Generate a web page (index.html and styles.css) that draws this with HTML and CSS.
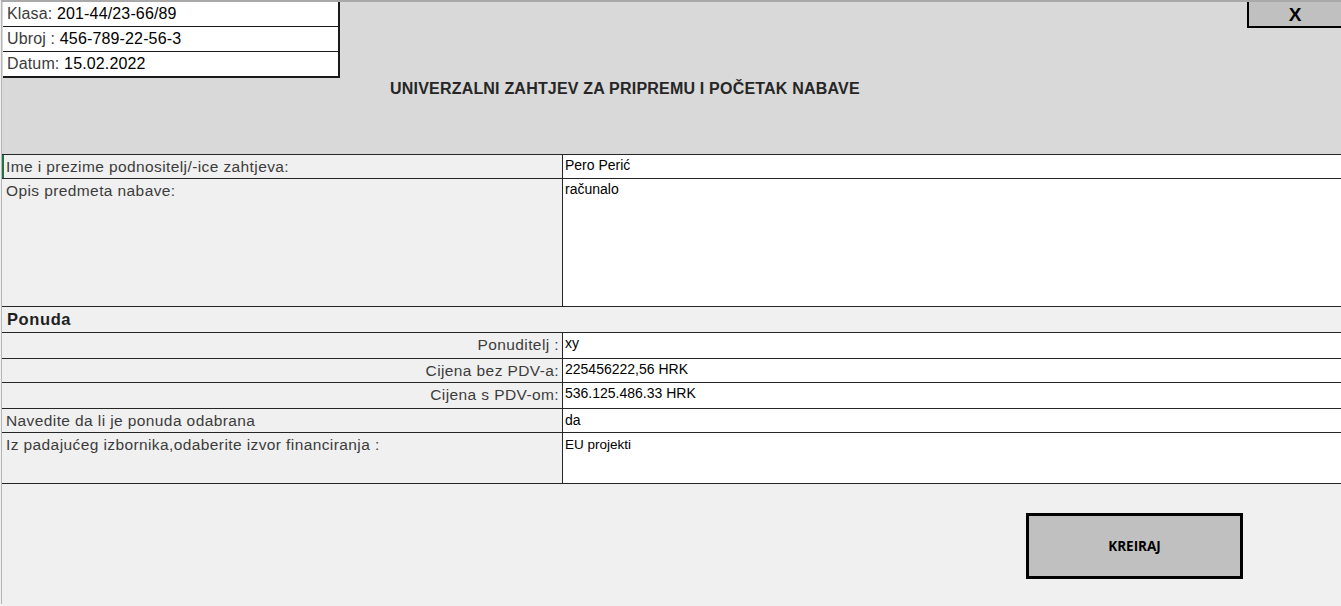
FILE: index.html
```html
<!DOCTYPE html>
<html lang="hr">
<head>
<meta charset="utf-8">
<title>Univerzalni zahtjev</title>
<link rel="stylesheet" href="styles.css">
</head>
<body>
<div class="frame">
  <header class="head">
    <div class="head-top">
      <div class="info">
        <div class="info-row"><span class="lbl">Klasa:</span> 201-44/23-66/89</div>
        <div class="info-row"><span class="lbl">Ubroj :</span> 456-789-22-56-3</div>
        <div class="info-row"><span class="lbl">Datum:</span> 15.02.2022</div>
      </div>
      <div class="close">X</div>
    </div>
    <h1 class="title">UNIVERZALNI ZAHTJEV ZA PRIPREMU I POČETAK NABAVE</h1>
  </header>
  <div class="table">
    <div class="row r1 focus"><div class="label">Ime i prezime podnositelj/-ice zahtjeva:</div><div class="value">Pero Perić</div></div>
    <div class="row r2"><div class="label">Opis predmeta nabave:</div><div class="value">računalo</div></div>
    <div class="row section"><div class="sec">Ponuda</div></div>
    <div class="row r3"><div class="label right">Ponuditelj :</div><div class="value">xy</div></div>
    <div class="row r4"><div class="label right">Cijena bez PDV-a:</div><div class="value">225456222,56 HRK</div></div>
    <div class="row r5"><div class="label right">Cijena s PDV-om:</div><div class="value">536.125.486.33 HRK</div></div>
    <div class="row r6"><div class="label">Navedite da li je ponuda odabrana</div><div class="value v-mid">da</div></div>
    <div class="row r7"><div class="label">Iz padajućeg izbornika,odaberite izvor financiranja :</div><div class="value v-small">EU projekti</div></div>
  </div>
  <div class="foot">
    <div class="btn">KREIRAJ</div>
  </div>
</div>
</body>
</html>
```
FILE: styles.css
```css
html, body {
  margin: 0;
  padding: 0;
  background: #f0f0f0;
  width: 1341px;
  height: 606px;
  overflow: hidden;
}
.frame {
  border-top: 2px solid #a9a9a9;
  border-left: 1px solid #b5b5b5;
  margin-left: 1px;
  height: 604px;
  box-sizing: border-box;
  display: flex;
  flex-direction: column;
  font-family: "Liberation Sans", Arial, sans-serif;
}
.head {
  background: #d9d9d9;
  height: 152px;
  padding-left: 1px;
  box-sizing: border-box;
}
.head-top {
  display: flex;
  justify-content: space-between;
  align-items: flex-start;
}
.info {
  width: 337px;
  background: #fff;
  border-right: 2px solid #1a1a1a;
  box-sizing: border-box;
}
.info-row {
  height: 25px;
  border-bottom: 1px solid #1a1a1a;
  box-sizing: border-box;
  font-size: 16px;
  letter-spacing: 0.15px;
  line-height: 24px;
  padding-left: 4px;
  color: #000;
}
.info-row:last-child { border-bottom-width: 2px; height: 26px; }
.lbl { color: #3c3c3c; }
.close {
  width: 94px;
  height: 26px;
  background: #c0c0c0;
  border-left: 2px solid #000;
  border-bottom: 2px solid #000;
  box-sizing: border-box;
  font-weight: bold;
  font-size: 19px;
  line-height: 25px;
  text-align: center;
  color: #000;
}
.title {
  margin: 1px 0 0 0;
  padding-left: 387px;
  font-size: 16px;
  letter-spacing: 0.2px;
  line-height: 20px;
  font-weight: bold;
  color: #262626;
}
.table {
  border-top: 1px solid #262626;
}
.row {
  display: flex;
  border-bottom: 1px solid #262626;
}
.r1 { height: 23px; }
.r2 { height: 127px; }
.section { height: 25px; }
.r3 { height: 25px; }
.r4 { height: 23px; }
.r5 { height: 25px; }
.r6 { height: 23px; }
.r7 { height: 50px; }
.label {
  width: 561px;
  flex: none;
  border-right: 1px solid #262626;
  background: #f0f0f0;
  color: #3c3c3c;
  font-size: 15.5px;
  letter-spacing: 0.4px;
  line-height: 18px;
  padding: 3px 0 0 4px;
  box-sizing: border-box;
  white-space: nowrap;
}
.focus .label { border-left: 2px solid #217346; padding-left: 2px; }
.label.right { text-align: right; padding-right: 3px; }
.value {
  flex: 1;
  background: #fff;
  color: #000;
  font-size: 14px;
  line-height: 17px;
  padding: 2px 0 0 2px;
}
.v-mid { padding-top: 3px; }
.v-small { font-size: 13.5px; padding-top: 3px; }
.sec {
  font-weight: bold;
  font-size: 16.5px;
  letter-spacing: 0.6px;
  line-height: 24px;
  padding-left: 5px;
  color: #1f1f1f;
}
.foot {
  flex: 1;
  display: flex;
  justify-content: flex-end;
  align-items: flex-start;
  padding: 29px 98px 0 0;
}
.btn {
  width: 217px;
  height: 66px;
  box-sizing: border-box;
  border: 3px solid #000;
  background: #c0c0c0;
  display: flex;
  align-items: center;
  justify-content: center;
  font-family: "Open Sans", "Liberation Sans", sans-serif;
  font-weight: bold;
  font-size: 13.5px;
  color: #000;
}
```
